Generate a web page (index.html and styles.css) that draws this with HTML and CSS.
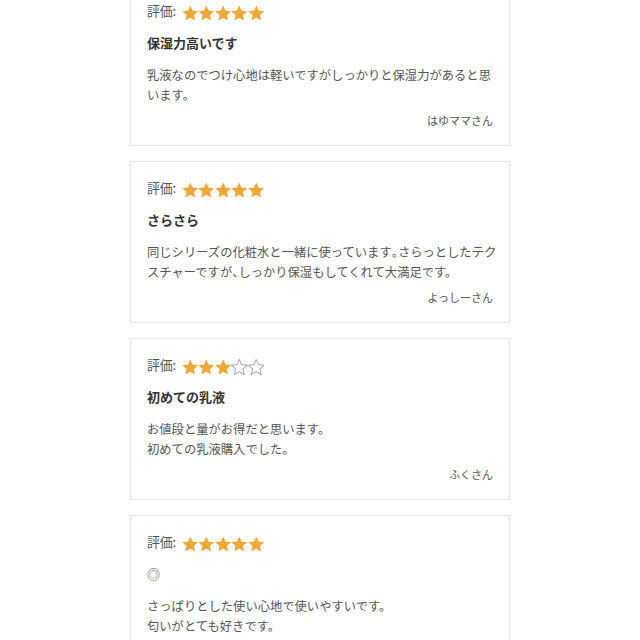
FILE: index.html
```html
<!DOCTYPE html>
<html lang="ja">
<head>
<meta charset="utf-8">
<link rel="stylesheet" href="styles.css">
</head>
<body>
<svg class="defs" width="0" height="0" aria-hidden="true">
  <defs>
    <path id="star" d="M8 0.4 L10.25 5.45 L15.7 6.0 L11.6 9.65 L12.75 15.1 L8 12.3 L3.25 15.1 L4.4 9.65 L0.3 6.0 L5.75 5.45 Z"/>
  </defs>
</svg>
<div class="reviews">
  <div class="card">
    <div class="rating"><span class="label">評価:</span><span class="stars">
      <svg class="star on" viewBox="0 0 16 16"><use href="#star"/></svg><svg class="star on" viewBox="0 0 16 16"><use href="#star"/></svg><svg class="star on" viewBox="0 0 16 16"><use href="#star"/></svg><svg class="star on" viewBox="0 0 16 16"><use href="#star"/></svg><svg class="star on" viewBox="0 0 16 16"><use href="#star"/></svg>
    </span></div>
    <div class="title">保湿力高いです</div>
    <p class="body">乳液なのでつけ心地は軽いですがしっかりと保湿力があると思<br>います。</p>
    <div class="name">はゆママさん</div>
  </div>
  <div class="card">
    <div class="rating"><span class="label">評価:</span><span class="stars">
      <svg class="star on" viewBox="0 0 16 16"><use href="#star"/></svg><svg class="star on" viewBox="0 0 16 16"><use href="#star"/></svg><svg class="star on" viewBox="0 0 16 16"><use href="#star"/></svg><svg class="star on" viewBox="0 0 16 16"><use href="#star"/></svg><svg class="star on" viewBox="0 0 16 16"><use href="#star"/></svg>
    </span></div>
    <div class="title">さらさら</div>
    <p class="body">同じシリーズの化粧水と一緒に使っています<span class="hw">。</span>さらっとしたテク<br>スチャーですが<span class="hw">、</span>しっかり保湿もしてくれて大満足です。</p>
    <div class="name">よっしーさん</div>
  </div>
  <div class="card">
    <div class="rating"><span class="label">評価:</span><span class="stars">
      <svg class="star on" viewBox="0 0 16 16"><use href="#star"/></svg><svg class="star on" viewBox="0 0 16 16"><use href="#star"/></svg><svg class="star on" viewBox="0 0 16 16"><use href="#star"/></svg><svg class="star off" viewBox="0 0 16 16"><use href="#star"/></svg><svg class="star off" viewBox="0 0 16 16"><use href="#star"/></svg>
    </span></div>
    <div class="title">初めての乳液</div>
    <p class="body">お値段と量がお得だと思います。<br>初めての乳液購入でした。</p>
    <div class="name">ふくさん</div>
  </div>
  <div class="card">
    <div class="rating"><span class="label">評価:</span><span class="stars">
      <svg class="star on" viewBox="0 0 16 16"><use href="#star"/></svg><svg class="star on" viewBox="0 0 16 16"><use href="#star"/></svg><svg class="star on" viewBox="0 0 16 16"><use href="#star"/></svg><svg class="star on" viewBox="0 0 16 16"><use href="#star"/></svg><svg class="star on" viewBox="0 0 16 16"><use href="#star"/></svg>
    </span></div>
    <div class="title plain">◎</div>
    <p class="body">さっぱりとした使い心地で使いやすいです。<br>匂いがとても好きです。</p>
  </div>
</div>
</body>
</html>
```

FILE: styles.css
```css
html, body {
  margin: 0;
  padding: 0;
  background: #fff;
  overflow: hidden;
}
body {
  font-family: "Noto Sans CJK JP", "Noto Sans", sans-serif;
  color: #555;
}
.defs {
  position: absolute;
  width: 0;
  height: 0;
}
.reviews {
  width: 380px;
  margin: -16px auto 0;
  display: flex;
  flex-direction: column;
  gap: 15px;
}
.card {
  border: 1px solid #e8e8e8;
  padding: 16px 16px 15px;
  display: flex;
  flex-direction: column;
}
.rating {
  display: flex;
  align-items: flex-start;
  height: 22px;
}
.label {
  font-size: 13px;
  line-height: 20px;
  color: #555;
  letter-spacing: -0.3px;
}
.stars {
  display: flex;
  margin-left: 6px;
  margin-top: 4px;
}
.star {
  width: 16.5px;
  height: 16.5px;
  display: block;
}
.star.on {
  fill: #efa73b;
}
.star.off {
  fill: none;
  stroke: #a8a8a8;
  stroke-width: 1;
}
.title {
  margin-top: 10px;
  font-size: 13px;
  line-height: 20px;
  font-weight: bold;
  color: #333;
}
.title.plain {
  font-weight: normal;
  color: #555;
}
.body {
  margin: 12px 0 0;
  font-size: 12.3px;
  line-height: 20px;
  white-space: nowrap;
  color: #555;
}
.hw {
  letter-spacing: -0.5em;
}
.name {
  margin-top: 5px;
  text-align: right;
  font-size: 11px;
  line-height: 20px;
  color: #555;
}
```
